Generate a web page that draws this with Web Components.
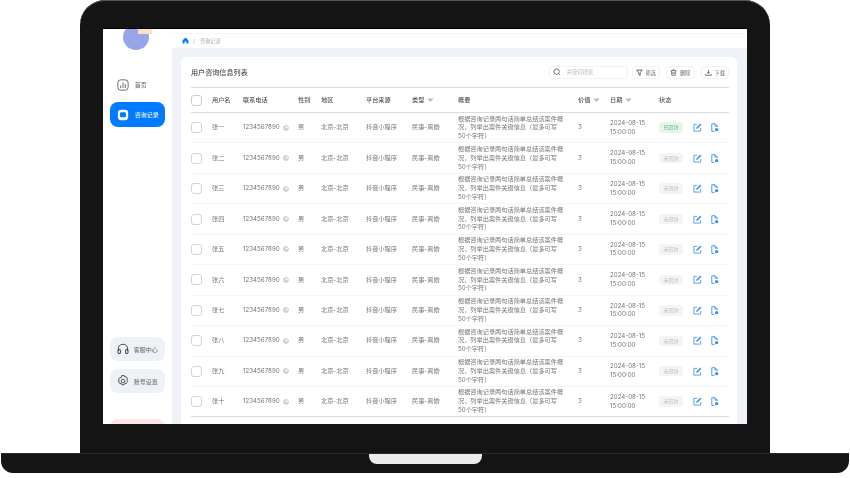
<!DOCTYPE html>
<html>
<head>
<meta charset="utf-8">
<style>
html, body { margin: 0; background: #fff; }
body { width: 850px; height: 478px; overflow: hidden; font-family: Inter, "Noto Sans CJK SC", sans-serif; }
</style>
</head>
<body>
<laptop-frame>
  <side-bar slot="side"></side-bar>
  <crumb-bar slot="crumb"></crumb-bar>
  <record-card slot="card"></record-card>
</laptop-frame>

<script>
const ICONS = {
  home: `<svg viewBox="0 0 12 12" width="7" height="7"><path fill="#007aff" d="M6 1 1 5.4V11h3.4V7.6h3.2V11H11V5.4z"/></svg>`,
  chart: `<svg viewBox="0 0 14 14" width="12" height="12" fill="none" stroke="#555" stroke-width="1"><rect x="1" y="1" width="12" height="12" rx="3.4"/><path d="M4.3 7.5v3M7 4v6.5M9.7 6v4.5"/></svg>`,
  chat: `<svg viewBox="0 0 14 14" width="12" height="12"><rect x="1" y="1" width="12" height="12" rx="3.6" fill="#fff"/><rect x="3.5" y="3.7" width="7" height="6" rx="1.6" fill="#007aff"/></svg>`,
  headset: `<svg viewBox="0 0 14 14" width="12" height="12" fill="none" stroke="#444" stroke-width="1.2"><path d="M1.6 9V6.8a5.4 5.4 0 0 1 10.8 0V9"/><rect x="1.2" y="7.6" width="2.8" height="4.6" rx="1.2"/><rect x="10" y="7.6" width="2.8" height="4.6" rx="1.2"/></svg>`,
  gear: `<svg viewBox="0 0 14 14" width="12" height="12" fill="none" stroke="#444" stroke-width="1" stroke-linejoin="round"><path d="M5.4.7h3.200l.5 1.700 1.700-.4 1.600 2.700-1.200 1.300 1.200 1.300-1.600 2.700-1.700-.4-.5 1.700H5.400l-.5-1.700-1.700.4-1.600-2.700L2.800 7 1.600 5.700 3.200 3l1.700.4z"/><circle cx="7" cy="7" r="2.100"/></svg>`,
  search: `<svg viewBox="0 0 10 10" width="8" height="8" fill="none" stroke="#444" stroke-width=".9"><circle cx="4.5" cy="4.5" r="3.4"/><path d="M7 7l2 2"/></svg>`,
  filter: `<svg viewBox="0 0 10 10" width="7" height="7" fill="none" stroke="#333" stroke-width="1"><path d="M1 1.5h8L6 5.2V9L4 8V5.2z"/></svg>`,
  trash: `<svg viewBox="0 0 10 10" width="7" height="7" fill="none" stroke="#444" stroke-width=".9"><path d="M1 2.4h8M3.5 2.2 4 1h2l.5 1.2M2 2.6l.6 6.4h4.8L8 2.6M4 4.4v2.8M6 4.4v2.8"/></svg>`,
  download: `<svg viewBox="0 0 10 10" width="7" height="7" fill="none" stroke="#333" stroke-width=".9"><path d="M5 1v5.4M3 4.6l2 2 2-2M1 7v2h8V7"/></svg>`,
  copy: `<svg viewBox="0 0 10 10" width="6" height="6" fill="none" stroke="#999" stroke-width=".9"><circle cx="5" cy="5" r="4"/><path d="M5 2.8A2.2 2.2 0 1 0 7.2 5"/></svg>`,
  edit: `<svg viewBox="0 0 10 10" width="9" height="9" fill="none" stroke="#4a9be8" stroke-width="1"><path d="M8.500 5.600V9H1V1.500h3.600"/><path d="M3.800 6.200 4.200 4.600 8 .9l1.100 1.100-3.700 3.800z" fill="#4a9be8" stroke-width=".5"/></svg>`,
  file: `<svg viewBox="0 0 10 10" width="9" height="9"><path fill="none" stroke="#3f92e6" stroke-width="1" d="M5 9.300H2V.8h3.600L8 3.200v1.400M5.500.8v2.600H8"/><circle cx="7.400" cy="7.400" r="1.900" fill="#3f92e6"/></svg>`,
  sort: `<svg viewBox="0 0 8 5" width="7" height="4.5"><path fill="#bbb" d="M.5.5h7L4 4.500z"/></svg>`
};

class LaptopFrame extends HTMLElement {
  constructor() {
    super();
    this.attachShadow({ mode: "open" }).innerHTML = `
    <style>
      :host { display: block; width: 850px; height: 478px; }
      .lid {
        box-sizing: border-box; width: 690px; height: 453px; margin-left: 80px;
        padding: 28px 23px 29px; background: #141414; border-radius: 25px 25px 0 0;
        box-shadow: inset 0 1px 0 #555;
      }
      .screen { display: flex; height: 396px; overflow: hidden; background: #eff3f8; border-top: 1px solid #000; box-sizing: border-box; filter: blur(.4px); }
      .content { flex: 1; min-width: 0; display: flex; flex-direction: column; }
      .body { flex: 1; padding: 9px 10px 0 9px; min-height: 0; }
      .base {
        display: flex; justify-content: center; height: 20px; margin: 0 1px;
        background: #141414; border-radius: 0 0 12px 12px; border-top: 1px solid #2a2a2a; box-sizing: border-box;
      }
      .notch { width: 113px; height: 10px; background: #ececec; border-radius: 0 0 8px 8px; }
    </style>
    <div class="lid">
      <div class="screen">
        <slot name="side"></slot>
        <div class="content">
          <slot name="crumb"></slot>
          <div class="body"><slot name="card"></slot></div>
        </div>
      </div>
    </div>
    <div class="base"><div class="notch"></div></div>`;
  }
}

class SideBar extends HTMLElement {
  constructor() {
    super();
    this.attachShadow({ mode: "open" }).innerHTML = `
    <style>
      :host { display: flex; flex-direction: column; align-items: center; width: 69px; flex: none; background: #fff; height: 100%; overflow: hidden; }
      .logo { position: relative; width: 26px; height: 26px; margin: -5px 3px 0 0; border-radius: 50%; background: #98a6e8; flex: none; }
      .logo::after { content: ""; position: absolute; left: 15px; top: 0; width: 14px; height: 10px; background: #fbe3c6; }
      .top { display: flex; flex-direction: column; margin-top: 22px; gap: 5px; }
      .bottom { display: flex; flex-direction: column; gap: 8px; margin-top: auto; }
      .red { width: 55px; height: 24px; margin-top: 18px; margin-bottom: -19px; background: #fde6e6; border-radius: 8px; flex: none; }
    </style>
    <div class="logo"></div>
    <div class="top">
      <nav-item>${ICONS.chart}<span>首页</span></nav-item>
      <nav-item active>${ICONS.chat}<span>咨询记录</span></nav-item>
    </div>
    <div class="bottom">
      <nav-item soft>${ICONS.headset}<span>客服中心</span></nav-item>
      <nav-item soft>${ICONS.gear}<span>账号设置</span></nav-item>
      <div class="red"></div>
    </div>`;
  }
}

class NavItem extends HTMLElement {
  constructor() {
    super();
    this.attachShadow({ mode: "open" }).innerHTML = `
    <style>
      :host { display: flex; align-items: center; gap: 6px; box-sizing: border-box; width: 55.5px; height: 25px; padding-left: 7px; border-radius: 8px; font-size: 6px; color: #666; }
      :host([active]) { background: #007aff; color: #fff; }
      :host([soft]) { background: #eef1f5; height: 24px; gap: 5px; }
    </style>
    <slot></slot>`;
  }
}

class CrumbBar extends HTMLElement {
  constructor() {
    super();
    this.attachShadow({ mode: "open" }).innerHTML = `
    <style>
      :host { display: block; flex: none; background: #fff; height: 19px; box-sizing: border-box; font-size: 5.2px; color: #aaa; }
      .strip { height: 4px; border-bottom: 1px solid #f5f6f8; }
      .path { display: flex; align-items: center; height: 13px; padding-left: 10px; }
      .sep { margin: 0 5px 0 4px; }
      svg { display: block; }
    </style>
    <div class="strip"></div>
    <div class="path">${ICONS.home}<span class="sep">/</span><span>咨询记录</span></div>`;
  }
}

class ToolButton extends HTMLElement {
  constructor() {
    super();
    this.attachShadow({ mode: "open" }).innerHTML = `
    <style>
      :host { display: inline-flex; align-items: center; justify-content: center; gap: 3px; box-sizing: border-box; width: 28.5px; height: 13px; border: 1px solid #f1f2f4; border-radius: 4px; background: #fff; font-size: 5.2px; color: #666; }
    </style>
    <slot></slot>`;
  }
}

class SearchBox extends HTMLElement {
  constructor() {
    super();
    this.attachShadow({ mode: "open" }).innerHTML = `
    <style>
      :host { display: flex; align-items: center; gap: 6px; box-sizing: border-box; width: 79px; height: 13px; padding-left: 3px; border: 1px solid #f1f2f4; border-radius: 4px; font-size: 5.4px; color: #bbb; }
      svg { display: block; }
    </style>
    ${ICONS.search}<span>关键词搜索</span>`;
  }
}

// shared columns for header and body rows
const COLS = "21px 31px 55px 23px 45px 46px 46px 120px 32px 49px 34px 17px 1fr";

class TableRow extends HTMLElement {
  constructor() {
    super();
    this.attachShadow({ mode: "open" }).innerHTML = `
    <style>
      :host { display: grid; grid-template-columns: ${COLS}; align-items: center; box-sizing: border-box; height: 30.44px; border-bottom: 1px solid #f4f5f7; font-size: 6.2px; line-height: 8.8px; color: #777; }
      :host([head]) { height: 25px; border-bottom: 1px solid #dcdcdc; color: #555; font-weight: 500; }
      :host([last]) { border-bottom: 1px solid #dcdcdc; }
      ::slotted(*) { min-width: 0; }
    </style>
    <slot></slot>`;
  }
}

class RecordRow extends HTMLElement {
  connectedCallback() {
    const name = this.getAttribute("name");
    const done = this.hasAttribute("done");
    const last = this.hasAttribute("last") ? "last" : "";
    const root = this.attachShadow({ mode: "open" });
    root.innerHTML = `
    <style>
      :host { display: block; }
      .box { display: block; width: 11px; height: 11px; box-sizing: border-box; border: 1px solid #d4d4d4; border-radius: 3px; }
      .phone { display: flex; align-items: center; gap: 3px; }
      .sum { width: 105.6px; }
      .date { width: 42px; }
      .tag { display: block; width: 24px; height: 10.5px; line-height: 10.5px; border-radius: 3px; text-align: center; font-size: 5px; background: #f4f4f4; color: #bbb; }
      .tag.done { background: #e6f4ea; color: #58b57e; }
      .op svg { display: block; }
    </style>
    <table-row ${last}>
      <span class="box"></span>
      <span>${name}</span>
      <span class="phone">1234567890${ICONS.copy}</span>
      <span>男</span>
      <span>北京-北京</span>
      <span>抖音小程序</span>
      <span>民事-离婚</span>
      <span class="sum">根据咨询记录两句话简单总结该案件概况&#xFF0C;列举出案件关键信息&#xFF08;最多可写50个字符&#xFF09;</span>
      <span>3</span>
      <span class="date">2024-08-15 15:00:00</span>
      <span class="tag ${done ? "done" : ""}">${done ? "已回访" : "未回访"}</span>
      <span class="op">${ICONS.edit}</span>
      <span class="op">${ICONS.file}</span>
    </table-row>`;
  }
}

class RecordCard extends HTMLElement {
  constructor() {
    super();
    const names = ["张一","张二","张三","张四","张五","张六","张七","张八","张九","张十"];
    const rows = names.map((n, i) =>
      `<record-row name="${n}"${i === 0 ? " done" : ""}${i === 9 ? " last" : ""}></record-row>`).join("");
    this.attachShadow({ mode: "open" }).innerHTML = `
    <style>
      :host { display: block; box-sizing: border-box; height: 400px; padding: 0 8px 0 10px; background: #fff; border-radius: 6px; }
      .bar { display: flex; align-items: center; height: 30px; border-bottom: 1px solid #dcdcdc; gap: 4px; }
      .title { margin-right: auto; font-size: 7.1px; font-weight: 500; color: #555; }
      tool-button:nth-of-type(n+2) { margin-left: 2px; }
      svg { display: block; }
      .box { display: block; width: 11px; height: 11px; box-sizing: border-box; border: 1px solid #cfcfcf; border-radius: 3px; }
      .sort { display: flex; align-items: center; gap: 2.5px; }
    </style>
    <div class="bar">
      <span class="title">用户咨询信息列表</span>
      <search-box></search-box>
      <tool-button>${ICONS.filter}<span>筛选</span></tool-button>
      <tool-button>${ICONS.trash}<span>删除</span></tool-button>
      <tool-button>${ICONS.download}<span>下载</span></tool-button>
    </div>
    <table-row head>
      <span class="box"></span>
      <span>用户名</span><span>联系电话</span><span>性别</span><span>地区</span><span>平台来源</span>
      <span class="sort">类型${ICONS.sort}</span>
      <span>概要</span>
      <span class="sort">价值${ICONS.sort}</span>
      <span class="sort">日期${ICONS.sort}</span>
      <span>状态</span>
    </table-row>
    ${rows}`;
  }
}

customElements.define("table-row", TableRow);
customElements.define("nav-item", NavItem);
customElements.define("tool-button", ToolButton);
customElements.define("search-box", SearchBox);
customElements.define("record-row", RecordRow);
customElements.define("record-card", RecordCard);
customElements.define("crumb-bar", CrumbBar);
customElements.define("side-bar", SideBar);
customElements.define("laptop-frame", LaptopFrame);
</script>
</body>
</html>
